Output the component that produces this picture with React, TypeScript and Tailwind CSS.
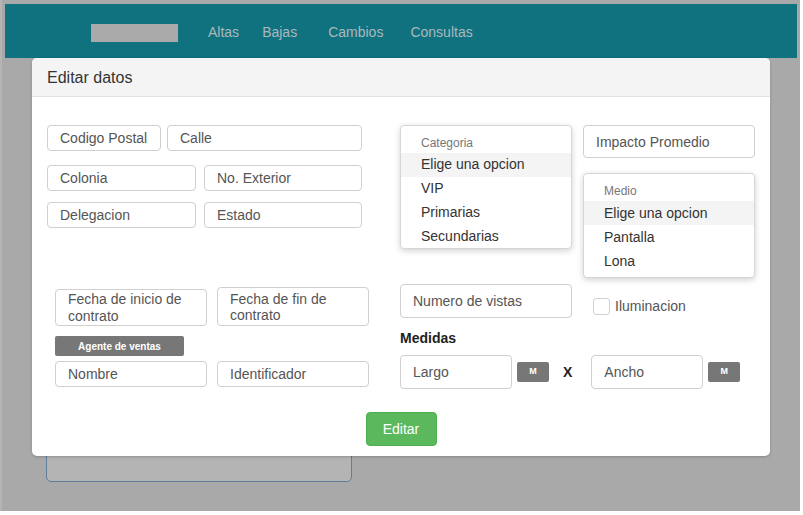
import React from "react";

const font = { fontFamily: '"Liberation Sans", Arial, sans-serif' };

function Field({ w, h = 26, text, className = "" }: { w: number; h?: number; text: string; className?: string }) {
  return (
    <div
      className={`flex items-center rounded-[4px] border border-[#cfcfcf] bg-white pl-3 text-[14px] leading-[16px] text-[#555] ${className}`}
      style={{ width: w, height: h }}
    >
      {text}
    </div>
  );
}

function DropList({ label, items, h }: { label: string; items: string[]; h: number }) {
  return (
    <div
      className="flex w-[172px] flex-col rounded-[4px] border border-[#d6d6d6] bg-white pt-[7px] shadow-[0_2px_6px_rgba(0,0,0,0.18)]"
      style={{ height: h }}
    >
      <div className="flex h-[20px] items-center pl-[20px] text-[12px] text-[#777]">{label}</div>
      {items.map((it, i) => (
        <div
          key={it}
          className={`flex h-[24px] items-center pl-[20px] text-[14px] text-[#333] ${i === 0 ? "bg-[#f4f4f4]" : ""}`}
        >
          {it}
        </div>
      ))}
    </div>
  );
}

function MBtn() {
  return (
    <div className="flex h-[20px] w-[32px] items-center justify-center rounded-[2px] bg-[#777] text-[9px] font-bold text-white">
      M
    </div>
  );
}

export default function App() {
  return (
    <div className="h-[515px] w-[803px] bg-white" style={font}>
      <div className="relative h-[511px] w-[800px] border-l-2 border-l-[#b5b5b5] bg-[#a9a9a9] pl-[3px] pr-[3px] pt-[4px]">
        {/* navbar */}
        <div className="flex h-[54px] items-center bg-[#10717f] pt-[3px] text-[14px] text-[#a9b9bd]">
          <div className="ml-[86px] h-[18px] w-[87px] bg-[#aaaaaa]" />
          <span className="ml-[30px]">Altas</span>
          <span className="ml-[23px]">Bajas</span>
          <span className="ml-[31px]">Cambios</span>
          <span className="ml-[27px]">Consultas</span>
        </div>
        {/* page behind */}
        <div className="pl-[41px] pt-[342px]">
          <div className="h-[82px] w-[306px] rounded-[5px] border border-[#5f7e9c] bg-[#b4b4b4]" />
        </div>

        {/* modal */}
        <div className="absolute left-[30px] top-[58px] w-[738px] overflow-hidden rounded-[5px] bg-white shadow-[0_1px_3px_rgba(0,0,0,0.2)]">
          <div className="flex h-[39px] items-center border-b border-[#e3e3e3] bg-[#f4f4f4] pl-[15px] pt-[2px] text-[16px] text-[#333]">
            Editar datos
          </div>
          <div className="flex pl-[15px] pt-[28px]">
            {/* left column */}
            <div className="flex w-[322px] flex-col">
              <div className="flex gap-[6px]">
                <Field w={114} text="Codigo Postal" />
                <Field w={195} text="Calle" />
              </div>
              <div className="mt-[14px] flex gap-[8px]">
                <Field w={149} text="Colonia" />
                <Field w={158} text="No. Exterior" />
              </div>
              <div className="mt-[11px] flex gap-[8px]">
                <Field w={149} text="Delegacion" />
                <Field w={158} text="Estado" />
              </div>
              <div className="ml-[8px] mt-[59px] flex items-end gap-[10px]">
                <Field w={152} h={37} text="Fecha de inicio de contrato" className="leading-[17px]" />
                <div className="flex h-[39px] w-[152px] items-start rounded-[4px] border border-[#cfcfcf] bg-white pl-3 pt-[3px] text-[14px] leading-[16px] text-[#555]">
                  Fecha de fin de contrato
                </div>
              </div>
              <div className="ml-[8px] mt-[10px] flex h-[20px] w-[129px] items-center justify-center rounded-[2px] bg-[#777] text-[10px] font-bold text-white">
                Agente de ventas
              </div>
              <div className="ml-[8px] mt-[5px] flex gap-[10px]">
                <Field w={152} text="Nombre" />
                <Field w={152} text="Identificador" />
              </div>
            </div>
            {/* right column */}
            <div className="ml-[31px] flex flex-col">
              <div className="flex gap-[11px]">
                <div className="flex flex-col">
                  <DropList label="Categoria" items={["Elige una opcion", "VIP", "Primarias", "Secundarias"]} h={124} />
                  <Field w={172} h={34} text="Numero de vistas" className="mt-[35px]" />
                </div>
                <div className="flex flex-col">
                  <Field w={172} h={33} text="Impacto Promedio" />
                  <div className="mt-[15px]">
                    <DropList label="Medio" items={["Elige una opcion", "Pantalla", "Lona"]} h={105} />
                  </div>
                  <div className="ml-[10px] mt-[18px] flex items-center">
                    <div className="h-[17px] w-[17px] rounded-[3px] border border-[#cfcfcf] bg-white" />
                    <span className="ml-[5px] text-[14px] text-[#555]">Iluminacion</span>
                  </div>
                </div>
              </div>
              <div className="mt-[11px] text-[14px] font-bold leading-[18px] text-[#222]">Medidas</div>
              <div className="mt-[8px] flex items-center">
                <Field w={112} h={34} text="Largo" />
                <div className="ml-[5px]">
                  <MBtn />
                </div>
                <span className="ml-[14px] text-[14px] font-bold text-[#222]">X</span>
                <div className="ml-[19px]">
                  <Field w={112} h={34} text="Ancho" />
                </div>
                <div className="ml-[5px]">
                  <MBtn />
                </div>
              </div>
            </div>
          </div>
          <div className="flex justify-center pb-[10px] pt-[23px]">
            <div className="flex h-[34px] w-[71px] items-center justify-center rounded-[4px] border border-[#4cae4c] bg-[#5cb85c] text-[14px] text-white">
              Editar
            </div>
          </div>
        </div>
      </div>
    </div>
  );
}
